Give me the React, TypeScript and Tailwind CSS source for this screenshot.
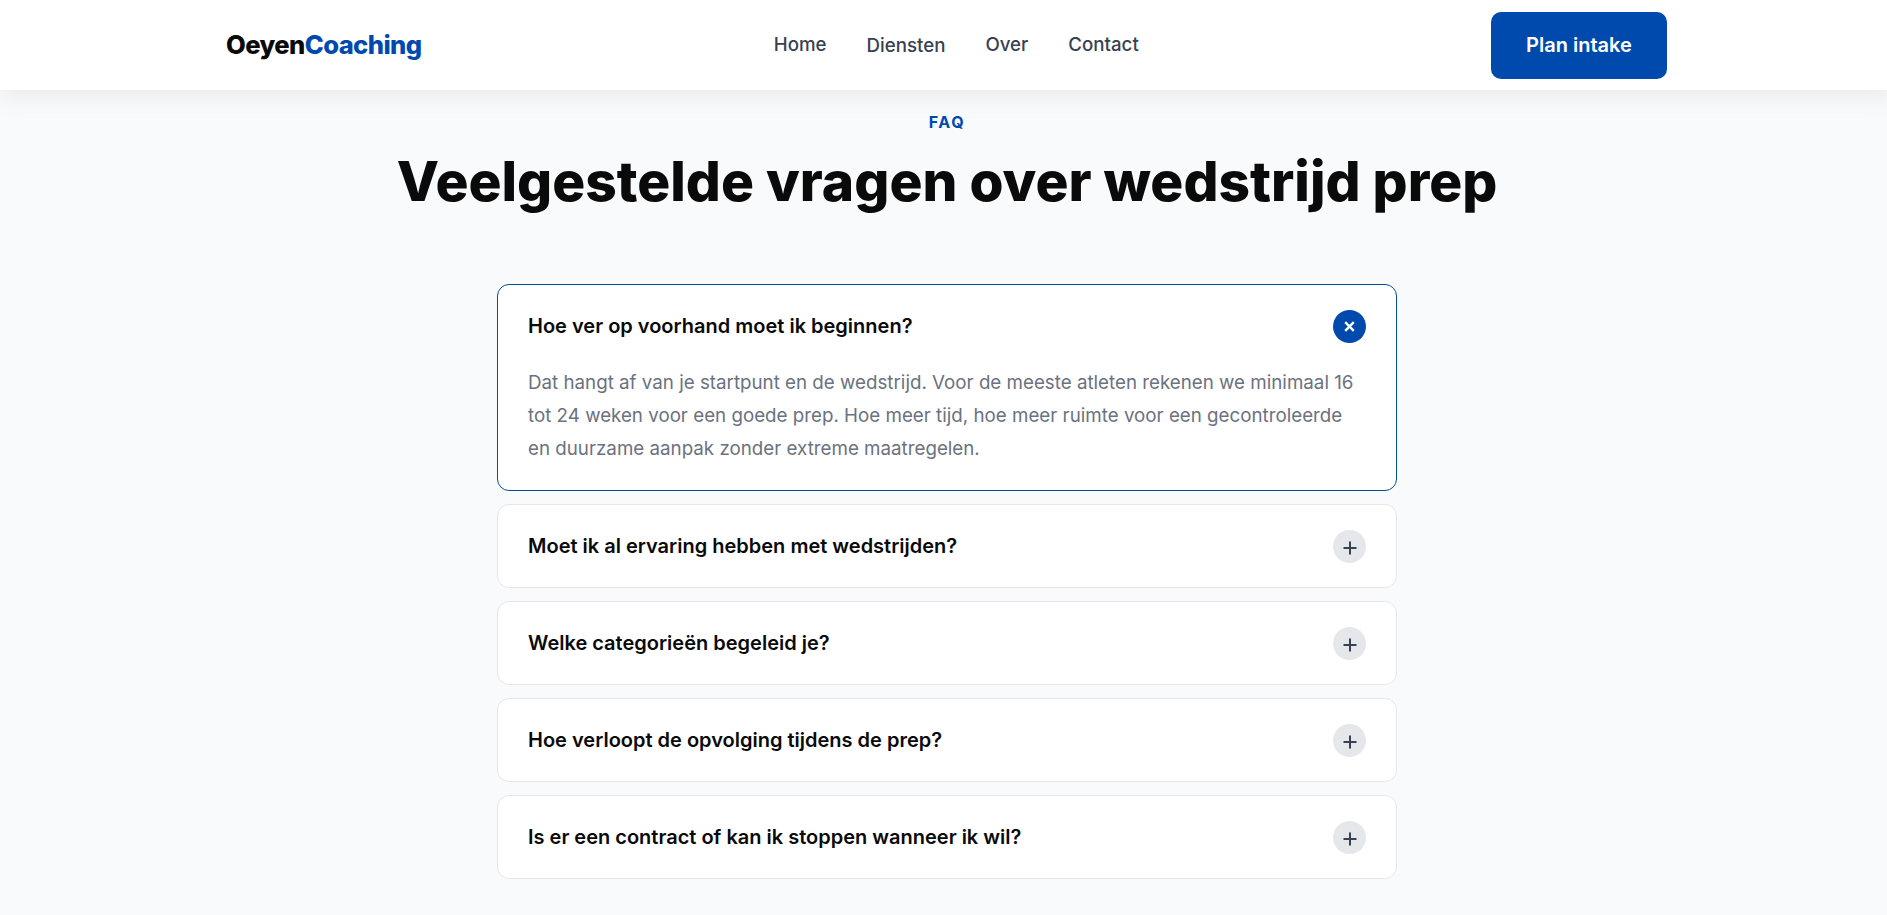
const faqs = [
  "Moet ik al ervaring hebben met wedstrijden?",
  "Welke categorieën begeleid je?",
  "Hoe verloopt de opvolging tijdens de prep?",
  "Is er een contract of kan ik stoppen wanneer ik wil?",
];

function Navbar() {
  return (
    <nav className="relative z-10 h-[90px] bg-white shadow-[0_4px_30px_rgba(0,0,0,0.08)]">
      <div className="mx-auto flex h-full w-[1440px] items-center justify-between">
        <a className="-ml-px text-[25.6px] font-extrabold tracking-[-0.6px] text-[#0a0a0a]">
          Oeyen<span className="text-[#004aad]">Coaching</span>
        </a>
        <div className="flex items-center gap-10 text-[18.7px] font-medium text-[#374151]">
          <a>Home</a>
          <a className="mt-[3px]">Diensten</a>
          <a>Over</a>
          <a>Contact</a>
        </div>
        <button className="h-[67px] w-[176px] rounded-[10px] bg-[#004aad] text-[20px] font-semibold text-white">
          Plan intake
        </button>
      </div>
    </nav>
  );
}

function PlusIcon() {
  return (
    <span className="flex h-[33px] w-[33px] items-center justify-center rounded-full bg-[#e5e7eb]">
      <svg className="mt-[3px]" width="14" height="14" viewBox="0 0 14 14" fill="none" stroke="#374151" strokeWidth="2">
        <path d="M7 0.5v13M0.5 7h13" />
      </svg>
    </span>
  );
}

function CloseIcon() {
  return (
    <span className="flex h-[33px] w-[33px] items-center justify-center rounded-full bg-[#004aad]">
      <svg width="11" height="11" viewBox="0 0 11 11" fill="none" stroke="#ffffff" strokeWidth="2.4">
        <path d="M1.2 1.2l8.6 8.6M9.8 1.2l-8.6 8.6" />
      </svg>
    </span>
  );
}

export default function App() {
  return (
    <div className="min-h-[915px] overflow-hidden bg-[#f9fafb] font-['Inter',sans-serif]">
      <div className="w-[1894px]">
        <Navbar />
        <header className="pt-[22px] text-center">
          <p className="text-[16px] font-bold leading-[20px] tracking-[1.6px] text-[#004aad]">FAQ</p>
          <h1 className="mt-[15px] text-[55px] font-extrabold leading-[68px] text-[#0a0a0a]">
            Veelgestelde vragen over wedstrijd prep
          </h1>
        </header>
        <main className="mx-auto mt-[69px] flex w-[900px] flex-col gap-[13px]">
          <div className="rounded-[12px] border border-[#004e94] bg-white px-[30px] pb-[25px] pt-[24px]">
            <div className="flex items-center justify-between">
              <h3 className="text-[20px] font-semibold leading-[34px] text-[#0a0a0a]">
                Hoe ver op voorhand moet ik beginnen?
              </h3>
              <CloseIcon />
            </div>
            <p className="mt-[23px] text-[18.75px] leading-[33px] text-[#6b7280]">
              Dat hangt af van je startpunt en de wedstrijd. Voor de meeste atleten rekenen we minimaal 16 tot 24 weken
              voor een goede prep. Hoe meer tijd, hoe meer ruimte voor een gecontroleerde en duurzame aanpak zonder
              extreme maatregelen.
            </p>
          </div>
          {faqs.map((q) => (
            <div key={q} className="rounded-[12px] border border-[#e5e7eb] bg-white px-[30px] py-[24px]">
              <div className="flex items-center justify-between">
                <h3 className="text-[20px] font-semibold leading-[34px] text-[#0a0a0a]">{q}</h3>
                <PlusIcon />
              </div>
            </div>
          ))}
        </main>
      </div>
    </div>
  );
}
